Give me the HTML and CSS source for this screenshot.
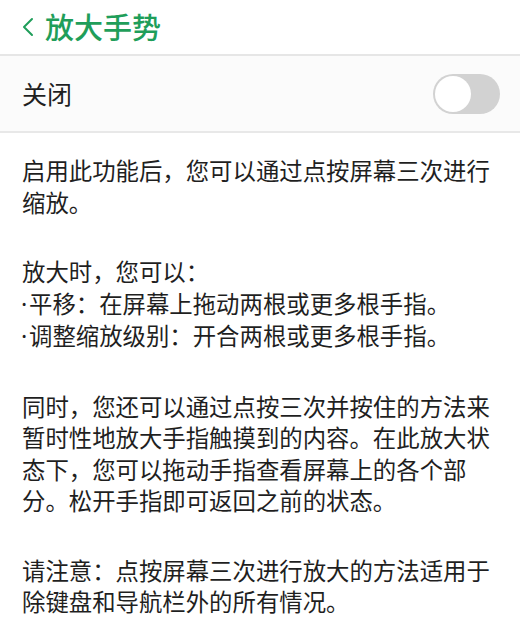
FILE: index.html
```html
<!DOCTYPE html>
<html lang="zh-CN">
<head>
<meta charset="utf-8">
<link rel="stylesheet" href="styles.css">
</head>
<body>
<div class="page">
  <header class="topbar">
    <svg class="back" width="14" height="20" viewBox="0 0 14 20"><path d="M11 2 L3 10 L11 18" fill="none" stroke="#1f9e5a" stroke-width="2" stroke-linecap="round" stroke-linejoin="round"/></svg>
    <h1 class="title">放大手势</h1>
  </header>
  <div class="row">
    <span class="row-label">关闭</span>
    <span class="switch"><span class="knob"></span></span>
  </div>
  <div class="content">
    <p>启用此功能后，您可以通过点按屏幕三次进行缩放。</p>
    <p>放大时，您可以：<br><span class="dot">·</span>平移：在屏幕上拖动两根或更多根手指。<br><span class="dot">·</span>调整缩放级别：开合两根或更多根手指。</p>
    <p>同时，您还可以通过点按三次并按住的方法来暂时性地放大手指触摸到的内容。在此放大状态下，您可以拖动手指查看屏幕上的各个部分。松开手指即可返回之前的状态。</p>
    <p>请注意：点按屏幕三次进行放大的方法适用于除键盘和导航栏外的所有情况。</p>
  </div>
</div>
</body>
</html>
```
FILE: styles.css
```css
html, body {
  margin: 0;
  padding: 0;
  background: #ffffff;
}
body {
  font-family: "Noto Sans CJK SC", "Noto Sans", sans-serif;
  color: #1f1f1f;
}
.page {
  width: 520px;
}
.topbar {
  height: 54px;
  display: flex;
  align-items: center;
  padding-left: 21px;
  border-bottom: 2px solid #e6e6e6;
}
.back {
  display: block;
  margin-right: 10px;
}
.title {
  margin: 0;
  font-size: 29px;
  font-weight: 500;
  color: #1f9e5a;
  line-height: 1;
  position: relative;
  top: -1px;
}
.row {
  height: 75px;
  display: flex;
  align-items: center;
  justify-content: space-between;
  padding: 0 20px 0 22px;
  background: #fbfbfb;
  border-bottom: 2px solid #e8e8e8;
}
.row-label {
  font-size: 25px;
  line-height: 1;
}
.switch {
  width: 67px;
  height: 40px;
  border-radius: 20px;
  background: #d2d2d2;
  display: flex;
  align-items: center;
  padding-left: 2px;
  box-sizing: border-box;
}
.knob {
  width: 36px;
  height: 36px;
  border-radius: 50%;
  background: #ffffff;
}
.content {
  padding: 22px 30px 0 22px;
  font-size: 23.4px;
  line-height: 31.5px;
}
.content p {
  margin: 0 0 38px 0;
}
.dot {
  font-family: "Noto Sans", sans-serif;
  display: inline-block;
  width: 8px;
  margin-left: -1px;
  text-align: left;
}
```
